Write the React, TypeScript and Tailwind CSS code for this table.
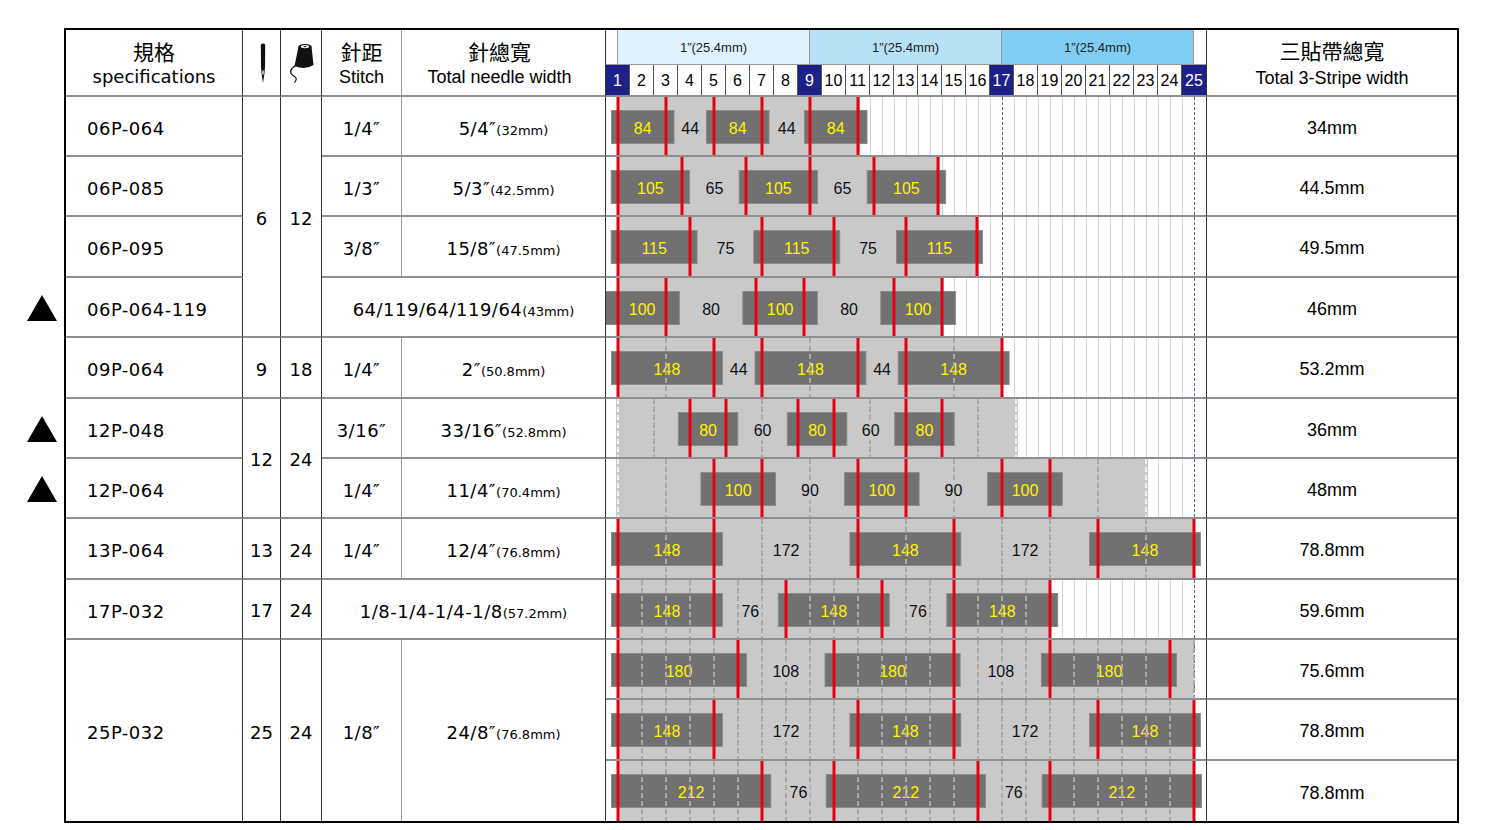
import React from 'react';

const X0 = 606;
const ROW_H = [60, 60, 61, 60, 61, 60, 60, 61, 60, 60, 61, 60];
const RS = [
  'row-start-2', 'row-start-3', 'row-start-4', 'row-start-5', 'row-start-6', 'row-start-7',
  'row-start-8', 'row-start-9', 'row-start-10', 'row-start-11', 'row-start-12', 'row-start-13',
];

const verdana = "font-['DejaVu_Sans',Verdana,sans-serif]";
const arial = "font-['Liberation_Sans',Arial,sans-serif]";
const cjk = "font-['Noto_Sans_CJK_TC','Noto_Sans_CJK_SC',sans-serif]";
const SVG_FONT = "'Liberation Sans', Arial, sans-serif";

const BR = 'border-r border-r-[#333]';
const BRG = 'border-r border-r-[#9a9a9a]';
const BB = 'border-b-2 border-b-[#8f8f8f]';

type Chart = {
  band: [number, number];
  bars: number[];
  w: number;
  tape: string;
  gap: string;
  reds: number[];
  dashed: number[];
  edges?: number[];
};

const step = (from: number, to: number, d: number) => {
  const out: number[] = [];
  for (let x = from; x <= to + 0.1; x += d) out.push(x);
  return out;
};
const without = (xs: number[], reds: number[]) => xs.filter((x) => !reds.some((r) => Math.abs(r - x) < 2));

const r9 = [618, 714, 786, 882, 954, 1050];
const r10 = [618, 738, 834, 954, 1050, 1170];
const r11 = [618, 714, 858, 954, 1098, 1194];
const r12 = [618, 762, 834, 978, 1050, 1194];

const CHARTS: Chart[] = [
  { band: [618, 860], bars: [611, 706, 804], w: 63.5, tape: '84', gap: '44', reds: [618, 666, 714, 762, 810, 858], dashed: [] },
  { band: [618, 940], bars: [610.7, 738.7, 866.7], w: 79.4, tape: '105', gap: '65', reds: [618, 682, 746, 810, 874, 938], dashed: [] },
  { band: [618, 978], bars: [610.7, 753.3, 896], w: 86.9, tape: '115', gap: '75', reds: [618, 690, 762, 834, 906, 977], dashed: [] },
  { band: [618, 944], bars: [604.3, 742.3, 880.3], w: 75.6, tape: '100', gap: '80', reds: [618, 666, 756, 804, 894, 942], dashed: [] },
  { band: [618, 1002], bars: [611, 754.5, 897.7], w: 111.9, tape: '148', gap: '44', reds: [618, 714, 762, 858, 906, 1002], dashed: [666, 810, 954] },
  { band: [616, 1018], bars: [677.8, 786.8, 894.2], w: 60.5, tape: '80', gap: '60', reds: [690, 726, 798, 834, 906, 942], dashed: [654, 762, 870, 978], edges: [618, 1016] },
  { band: [616, 1148], bars: [700.4, 844, 987.2], w: 75.6, tape: '100', gap: '90', reds: [714, 762, 858, 906, 1002, 1050], dashed: [666, 810, 954, 1098], edges: [618, 1146] },
  { band: [618, 1194], bars: [611, 849.4, 1089], w: 111.9, tape: '148', gap: '172', reds: r11, dashed: [666, 762, 810, 906, 1002, 1050, 1146] },
  { band: [618, 1050], bars: [611, 777.8, 946.3], w: 111.9, tape: '148', gap: '76', reds: r9, dashed: without(step(618, 1050, 24), r9) },
  { band: [618, 1194], bars: [611, 824.5, 1040.9], w: 136.1, tape: '180', gap: '108', reds: r10, dashed: without(step(618, 1194, 24), r10) },
  { band: [618, 1194], bars: [611, 849.4, 1089], w: 111.9, tape: '148', gap: '172', reds: r11, dashed: without(step(618, 1194, 24), r11) },
  { band: [618, 1194], bars: [611, 825.7, 1041.6], w: 160.3, tape: '212', gap: '76', reds: r12, dashed: without(step(618, 1194, 24), r12) },
];

const TOTAL3 = ['34mm', '44.5mm', '49.5mm', '46mm', '53.2mm', '36mm', '48mm', '78.8mm', '59.6mm', '75.6mm', '78.8mm', '78.8mm'];
const SPECS = ['06P-064', '06P-085', '06P-095', '06P-064-119', '09P-064', '12P-048', '12P-064', '13P-064', '17P-032'];

function ChartRow({ c, h }: { c: Chart; h: number }) {
  const lx = (x: number) => x - X0;
  const grid: number[] = [];
  for (let k = 1; k < 50; k++) if (k % 16 !== 1) grid.push(k * 12);
  const barY = 13;
  const barH = 34;
  const mid = barY + barH / 2 + 1;
  const gaps = c.bars.slice(0, -1).map((b, i) => (b + c.w + c.bars[i + 1]) / 2);
  const gapW = c.gap.length * 9 + 4;
  return (
    <svg width={600} height={h} className="block">
      {grid.map((g) => (
        <line key={g} x1={g + 0.5} x2={g + 0.5} y1={0} y2={h} stroke="#d5d5d5" strokeWidth={1} />
      ))}
      {[12, 204, 396, 588].map((g) => (
        <line key={'n' + g} x1={g + 0.5} x2={g + 0.5} y1={0} y2={h} stroke="#5a5ea8" strokeWidth={1} strokeDasharray="3 2" />
      ))}
      <rect x={lx(c.band[0])} y={0} width={c.band[1] - c.band[0]} height={h} fill="#c9c9ca" />
      {c.bars.map((b) => (
        <rect key={b} x={lx(b) + 0.5} y={barY + 0.5} width={c.w - 1} height={barH - 1} fill="#727171" stroke="#8b8b8b" strokeWidth={1} />
      ))}
      {c.bars.map((b) => (
        <text
          key={'t' + b}
          x={lx(b + c.w / 2)}
          y={mid}
          textAnchor="middle"
          dominantBaseline="central"
          fill="#fff100"
          fontFamily={SVG_FONT}
          fontSize={16}
        >
          {c.tape}
        </text>
      ))}
      {c.dashed.map((d) => (
        <line key={'d' + d} x1={lx(d)} x2={lx(d)} y1={0} y2={h} stroke="#a9a9a9" strokeWidth={2} strokeDasharray="5 3" />
      ))}
      {(c.edges ?? []).map((d) => (
        <line key={'e' + d} x1={lx(d)} x2={lx(d)} y1={0} y2={h} stroke="#f2f2f2" strokeWidth={2} strokeDasharray="5 3" />
      ))}
      {gaps.map((g) => (
        <g key={'g' + g}>
          <rect x={lx(g) - gapW / 2} y={mid - 10} width={gapW} height={20} fill="#c9c9ca" />
          <text
            x={lx(g)}
            y={mid}
            textAnchor="middle"
            dominantBaseline="central"
            fill="#111"
            fontFamily={SVG_FONT}
            fontSize={16}
          >
            {c.gap}
          </text>
        </g>
      ))}
      {c.reds.map((r) => (
        <line key={'r' + r} x1={lx(r)} x2={lx(r)} y1={0} y2={h} stroke="#e60012" strokeWidth={3} />
      ))}
    </svg>
  );
}

function NeedleIcon() {
  return (
    <svg width="8" height="40" viewBox="0 0 8 40">
      <path d="M1.8 1.5 Q4 -0.4 6.2 1.5 L6 24 L5.4 31 L4 40 L2.6 31 L2 24 Z" fill="#111" />
      <ellipse cx="4" cy="29.5" rx="0.7" ry="2.6" fill="#fff" />
    </svg>
  );
}

function SpoolIcon() {
  return (
    <svg width="26" height="40" viewBox="0 0 26 40">
      <path d="M10.5 3.5 L23.5 3.5 L25.5 22 Q17 27.5 6.5 23 Z" fill="#111" />
      <ellipse cx="17" cy="3.8" rx="6.6" ry="2.9" fill="#111" />
      <ellipse cx="17" cy="3.6" rx="4.2" ry="1.6" fill="#fff" />
      <ellipse cx="17" cy="3.6" rx="1.6" ry="0.7" fill="#111" />
      <path d="M8 22.5 C2.5 25, 1 29.5, 4.5 32 S 10 35.5, 6.5 39.5" fill="none" stroke="#111" strokeWidth="1.2" />
    </svg>
  );
}

function Triangle() {
  return (
    <svg width="30" height="26" viewBox="0 0 30 26">
      <polygon points="15,0 30,26 0,26" fill="#000" />
    </svg>
  );
}

function RulerHeader() {
  const nums = Array.from({ length: 25 }, (_, i) => i + 1);
  return (
    <div className={`flex flex-col h-full ${arial}`}>
      <div className="flex h-[35px] border-b border-b-[#9a9a9a] text-[13px] text-[#222]">
        <div className="w-[12px] border-r border-r-[#9a9a9a] bg-white" />
        <div className="w-[192px] bg-[#dff1fc] border-r border-r-[#9a9a9a] flex items-center justify-center pt-[2px]">1”(25.4mm)</div>
        <div className="w-[192px] bg-[#b6e1f7] border-r border-r-[#9a9a9a] flex items-center justify-center pt-[2px]">1”(25.4mm)</div>
        <div className="w-[192px] bg-[#7fcdf3] border-r border-r-[#9a9a9a] flex items-center justify-center pt-[2px]">1”(25.4mm)</div>
        <div className="flex-1 bg-white" />
      </div>
      <div className="flex flex-1 text-[16px]">
        {nums.map((n) => {
          const navy = n % 8 === 1;
          return (
            <div
              key={n}
              className={`w-[24px] flex items-center justify-center pt-[2px] ${n < 25 ? 'border-r border-r-[#555]' : ''} ${
                navy ? 'bg-[#1d2088] text-white' : 'bg-white text-black'
              }`}
            >
              {n}
            </div>
          );
        })}
      </div>
    </div>
  );
}

function Frac({ main, mm }: { main: string; mm: string }) {
  return (
    <span className={`${verdana} text-[18px] tracking-[0.5px]`}>
      {main}
      <span className="text-[13px] tracking-normal">{mm}</span>
    </span>
  );
}

export default function App() {
  const groups = [
    { i: 0, span: 'row-span-4', n: '6', s: '12', last: false },
    { i: 4, span: '', n: '9', s: '18', last: false },
    { i: 5, span: 'row-span-2', n: '12', s: '24', last: false },
    { i: 7, span: '', n: '13', s: '24', last: false },
    { i: 8, span: '', n: '17', s: '24', last: false },
    { i: 9, span: 'row-span-3', n: '25', s: '24', last: true },
  ];
  const stitch = [
    { i: 0, st: '1/4″', tw: '5/4″', mm: '(32mm)' },
    { i: 1, st: '1/3″', tw: '5/3″', mm: '(42.5mm)' },
    { i: 2, st: '3/8″', tw: '15/8″', mm: '(47.5mm)' },
    { i: 3, merged: '64/119/64/119/64', mm: '(43mm)' },
    { i: 4, st: '1/4″', tw: '2″', mm: '(50.8mm)' },
    { i: 5, st: '3/16″', tw: '33/16″', mm: '(52.8mm)' },
    { i: 6, st: '1/4″', tw: '11/4″', mm: '(70.4mm)' },
    { i: 7, st: '1/4″', tw: '12/4″', mm: '(76.8mm)' },
    { i: 8, merged: '1/8-1/4-1/4-1/8', mm: '(57.2mm)' },
  ];

  return (
    <div className="w-[1500px] h-[830px] bg-white flex text-black overflow-hidden">
      {/* markers */}
      <div className="w-[64px] pt-[30px] flex flex-col">
        <div className="h-[67px]" />
        {ROW_H.map((h, i) => (
          <div key={i} style={{ height: h }} className="flex items-center pl-[27px]">
            {(i === 3 || i === 5 || i === 6) && <Triangle />}
          </div>
        ))}
      </div>

      <div className="mt-[28px]">
        <div className="grid grid-cols-[177px_38px_41px_80px_204px_601px_250px] grid-rows-[67px_60px_60px_61px_60px_61px_60px_60px_61px_60px_60px_61px_60px] border-2 border-black w-[1395px]">
          {/* header */}
          <div className={`col-start-1 row-start-1 ${BR} ${BB} flex flex-col items-center justify-center leading-[26px] pt-[3px]`}>
            <span className={`${cjk} text-[21px]`}>規格</span>
            <span className={`${verdana} text-[18px]`}>specifications</span>
          </div>
          <div className={`col-start-2 row-start-1 ${BR} ${BB} flex items-center justify-center pl-[2px]`}>
            <NeedleIcon />
          </div>
          <div className={`col-start-3 row-start-1 ${BR} ${BB} flex items-center justify-center`}>
            <SpoolIcon />
          </div>
          <div className={`col-start-4 row-start-1 ${BRG} ${BB} flex flex-col items-center justify-center leading-[26px] pt-[3px]`}>
            <span className={`${cjk} text-[21px]`}>針距</span>
            <span className={`${arial} text-[18px]`}>Stitch</span>
          </div>
          <div className={`col-start-5 row-start-1 ${BR} ${BB} flex flex-col items-center justify-center leading-[26px] pt-[3px] pr-[8px]`}>
            <span className={`${cjk} text-[21px]`}>針總寬</span>
            <span className={`${arial} text-[18px]`}>Total needle width</span>
          </div>
          <div className={`col-start-6 row-start-1 ${BR} ${BB}`}>
            <RulerHeader />
          </div>
          <div className={`col-start-7 row-start-1 ${BB} flex flex-col items-center justify-center leading-[28px] pt-[2px]`}>
            <span className={`${cjk} text-[21px]`}>三貼帶總寬</span>
            <span className={`${arial} text-[18px]`}>Total 3-Stripe width</span>
          </div>

          {/* specifications */}
          {SPECS.map((s, i) => (
            <div key={s} className={`col-start-1 ${RS[i]} ${BR} ${BB} flex items-center pl-[21px] pt-[4px] ${verdana} text-[18px] tracking-[0.5px]`}>
              {s}
            </div>
          ))}
          <div className={`col-start-1 row-start-11 row-span-3 ${BR} flex items-center pl-[21px] pt-[4px] ${verdana} text-[18px] tracking-[0.5px]`}>
            25P-032
          </div>

          {/* needle and thread counts */}
          {groups.map((g) => (
            <React.Fragment key={g.i}>
              <div className={`col-start-2 ${RS[g.i]} ${g.span} ${BR} ${g.last ? '' : BB} flex items-center justify-center pt-[3px] ${verdana} text-[18px]`}>
                {g.n}
              </div>
              <div className={`col-start-3 ${RS[g.i]} ${g.span} ${BR} ${g.last ? '' : BB} flex items-center justify-center pt-[3px] ${verdana} text-[18px]`}>
                {g.s}
              </div>
            </React.Fragment>
          ))}

          {/* stitch and total width */}
          {stitch.map((r) =>
            r.merged ? (
              <div key={r.i} className={`col-start-4 col-span-2 ${RS[r.i]} ${BR} ${BB} flex items-center justify-center pt-[4px]`}>
                <Frac main={r.merged} mm={r.mm} />
              </div>
            ) : (
              <React.Fragment key={r.i}>
                <div className={`col-start-4 ${RS[r.i]} ${BRG} ${BB} flex items-center justify-center pt-[4px] ${verdana} text-[18px] tracking-[0.5px]`}>
                  {r.st}
                </div>
                <div className={`col-start-5 ${RS[r.i]} ${BR} ${BB} flex items-center justify-center pt-[4px]`}>
                  <Frac main={r.tw ?? ''} mm={r.mm} />
                </div>
              </React.Fragment>
            )
          )}
          <div className={`col-start-4 row-start-11 row-span-3 ${BRG} flex items-center justify-center pt-[4px] ${verdana} text-[18px] tracking-[0.5px]`}>
            1/8″
          </div>
          <div className={`col-start-5 row-start-11 row-span-3 ${BR} flex items-center justify-center pt-[4px]`}>
            <Frac main="24/8″" mm="(76.8mm)" />
          </div>

          {/* stripe chart */}
          {CHARTS.map((c, i) => (
            <div key={'c' + i} className={`col-start-6 ${RS[i]} ${BR} ${i < 11 ? BB : ''} overflow-hidden`}>
              <ChartRow c={c} h={ROW_H[i] - (i < 11 ? 2 : 0)} />
            </div>
          ))}

          {/* total 3-stripe width */}
          {TOTAL3.map((t, i) => (
            <div key={'t' + i} className={`col-start-7 ${RS[i]} ${i < 11 ? BB : ''} flex items-center justify-center pt-[4px] ${arial} text-[18px]`}>
              {t}
            </div>
          ))}
        </div>
      </div>
    </div>
  );
}
